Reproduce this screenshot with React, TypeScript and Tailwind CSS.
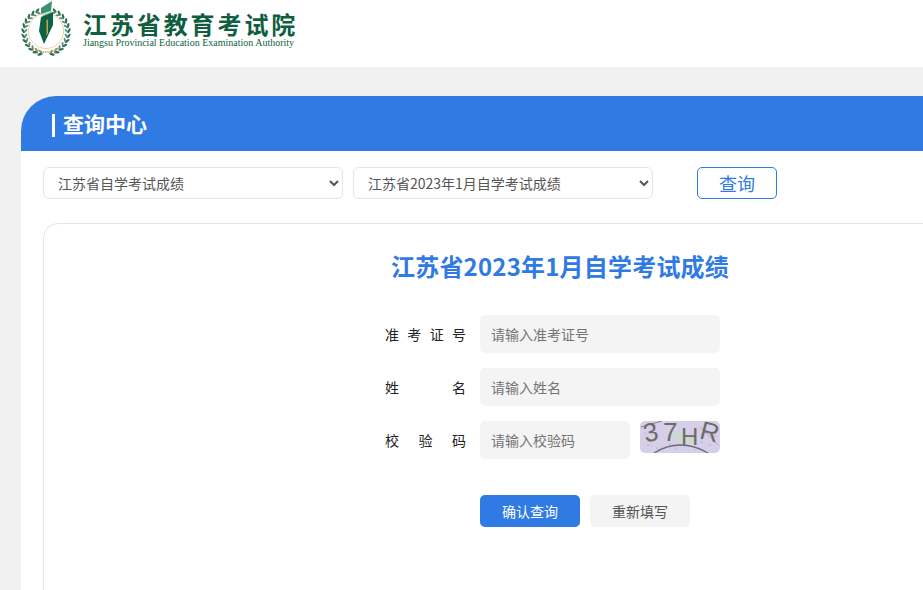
import React from "react";

const font = '"Noto Sans CJK SC", "Liberation Sans", sans-serif';

function Emblem() {
  const leaves: React.ReactNode[] = [];
  for (let i = 0; i < 2; i++) {
    const side = i === 0 ? -1 : 1;
    for (let k = 0; k < 12; k++) {
      const deg = 22 + k * 13;
      const a = (deg * Math.PI) / 180;
      const x = 46 + side * 23 * Math.sin(a);
      const y = 32 - 23 * Math.cos(a);
      const rot = side * (deg + 30);
      leaves.push(<ellipse key={`o${i}${k}`} cx={x} cy={y} rx="2.8" ry="1.2" fill="#2f6f52" transform={`rotate(${rot} ${x} ${y})`} />);
      const x2 = 46 + side * 20.5 * Math.sin(a);
      const y2 = 32 - 20.5 * Math.cos(a);
      leaves.push(<ellipse key={`i${i}${k}`} cx={x2} cy={y2} rx="2.4" ry="1" fill="#5c8f78" transform={`rotate(${side * (deg - 40)} ${x2} ${y2})`} />);
    }
  }
  return (
    <svg width="60" height="60" viewBox="15 0 60 60" className="block shrink-0" aria-hidden="true">
      <circle cx="46" cy="31" r="17.500" fill="none" stroke="#f2cfa8" strokeWidth="1" />
      {leaves}
      <path d="M41 8 L52 1 L51 11 L41 14 Z" fill="#3d9173" />
      <path d="M42 15 L52 11 L51 14 L43 17 Z" fill="#a9cfbe" />
      <path d="M41 17 L53 12 L53 25 L44 44 L39 31 Z" fill="#0d6243" />
      <path d="M46.500 20 L48 19.500 L48 33 L46.500 36 Z" fill="#c9a24a" />
      <path d="M33 48 Q46 56 59 48" fill="none" stroke="#d9925a" strokeWidth="1.500" strokeDasharray="1.500 1" />
    </svg>
  );
}

function Captcha() {
  return (
    <svg width="80" height="32" viewBox="0 0 80 32" className="block rounded-[5px] shrink-0" aria-label="37HR">
      <rect width="80" height="32" fill="#d5cfe9" />
      <path d="M30 14 Q42 6 56 20 L44 26 Z" fill="#c9dcc9" opacity="0.7" />
      <path d="M1 6 L22 0" stroke="#77707f" strokeWidth="0.8" fill="none" />
      <path d="M14 32 Q40 16 68 32" stroke="#6d6a70" strokeWidth="1.300" fill="none" />
      <path d="M60 6 L78 24" stroke="#9b95a8" strokeWidth="0.6" fill="none" />
      <g fill="#6f6b66" fontFamily='"Liberation Sans", sans-serif' fontSize="26">
        <text x="4" y="20" transform="rotate(-12 12 14)">3</text>
        <text x="23" y="20">7</text>
        <text x="41" y="24" fontSize="24">H</text>
        <text x="60" y="19" transform="rotate(14 66 12)">R</text>
      </g>
      <g fill="#7f7894">
        <circle cx="8" cy="24" r="0.500" /><circle cx="17" cy="27" r="0.500" /><circle cx="30" cy="23" r="0.500" />
        <circle cx="62" cy="21" r="0.500" /><circle cx="70" cy="24" r="0.500" /><circle cx="75" cy="15" r="0.500" />
        <circle cx="5" cy="12" r="0.500" /><circle cx="58" cy="27" r="0.500" /><circle cx="36" cy="27" r="0.500" />
      </g>
    </svg>
  );
}

function Field({ label, placeholder, short }: { label: string; placeholder: string; short?: boolean }) {
  return (
    <div className="flex items-center">
      <label className="w-[81px] mr-[14px] text-[14px] text-[#222] [text-align:justify] [text-align-last:justify] shrink-0">{label}</label>
      <input
        placeholder={placeholder}
        className={`${short ? "w-[150px]" : "w-[240px]"} h-[38px] pl-[11px] rounded-[5px] bg-[#f4f4f4] text-[14px] outline-none placeholder:text-[#757575]`}
      />
      {short && <div className="ml-[10px] -mt-[6px]"><Captcha /></div>}
    </div>
  );
}

export default function App() {
  return (
    <div className="w-[923px] h-[590px] overflow-hidden bg-[#f1f1f1]" style={{ fontFamily: font }}>
      <header className="h-[67px] bg-white flex items-start pl-[15px]">
        <Emblem />
        <div className="ml-[8px] pt-[10px] text-[#0f5f3f]">
          <div className="text-[24px] leading-[28px] font-bold tracking-[2.900px] whitespace-nowrap">江苏省教育考试院</div>
          <div className="text-[10px] leading-[10px] whitespace-nowrap" style={{ fontFamily: '"Liberation Serif", serif' }}>
            Jiangsu Provincial Education Examination Authority
          </div>
        </div>
      </header>

      <main className="mt-[29px] ml-[21px] w-[1100px] h-[494px] bg-white rounded-tl-[35px]">
        <div className="h-[55px] bg-[#307ae3] rounded-tl-[35px] flex items-center pl-[31px] text-white">
          <span className="w-[3px] h-[23px] mt-[3px] bg-white" />
          <h1 className="ml-[8px] text-[21px] font-bold leading-none">查询中心</h1>
        </div>

        <div className="flex items-center ml-[22px] mt-[16px]">
          <select className="w-[300px] h-[32px] pl-[10px] border border-[#e5e5e5] rounded-[6px] bg-white text-[14px] text-[#555]">
            <option>江苏省自学考试成绩</option>
          </select>
          <select className="w-[300px] h-[32px] ml-[10px] pl-[10px] border border-[#e5e5e5] rounded-[6px] bg-white text-[14px] text-[#555]">
            <option>江苏省2023年1月自学考试成绩</option>
          </select>
          <button className="w-[80px] h-[32px] ml-[44px] border border-[#307ae3] rounded-[5px] bg-white text-[18px] leading-none text-[#307ae3]">查询</button>
        </div>

        <section className="ml-[22px] mt-[24px] w-[1034px] h-[400px] border border-[#e5e5e5] rounded-[15px] bg-white">
          <h2 className="mt-[25px] text-center text-[24px] leading-[34px] tracking-[0.2px] font-bold text-[#307ae3]">江苏省2023年1月自学考试成绩</h2>
          <div className="w-[350px] mx-auto mt-[32px] flex flex-col gap-[15px]">
            <Field label="准考证号" placeholder="请输入准考证号" />
            <Field label="姓名" placeholder="请输入姓名" />
            <Field label="校验码" placeholder="请输入校验码" short />
          </div>
          <div className="w-[350px] mx-auto mt-[36px] pl-[95px] flex gap-[10px]">
            <button className="w-[100px] h-[32px] rounded-[5px] bg-[#307ae3] text-white text-[14px]">确认查询</button>
            <button className="w-[100px] h-[32px] rounded-[5px] bg-[#f4f4f4] text-[#555] text-[14px]">重新填写</button>
          </div>
        </section>
      </main>
    </div>
  );
}
